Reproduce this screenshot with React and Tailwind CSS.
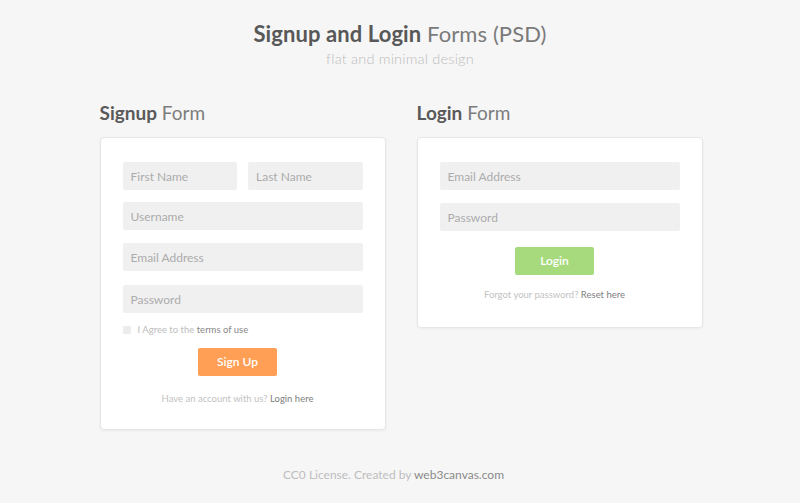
const inputCls =
	'block h-[28px] w-full rounded-[2px] bg-[#f0f0f0] px-[8px] text-[12px] text-[#555] placeholder:text-[#acacac] outline-none';

const Field = ({ placeholder, type = 'text', className = '' }) => (
	<input type={type} placeholder={placeholder} className={`${inputCls} ${className}`} />
);

const App = () => {
	return (
		<div
			className="min-h-[503px] w-full bg-[#f6f6f6] text-[#555]"
			style={{ fontFamily: 'Lato, "Open Sans", sans-serif' }}>
			{/* header */}
			<div className="pt-[20px] text-center">
				<h1 className="text-[22px] leading-[28px] tracking-[0.1px]">
					<span className="font-bold text-[#585858]">Signup and Login</span>{' '}
					<span className="text-[#7a7a7a]">Forms (PSD)</span>
				</h1>
				<p className="mt-[2px] text-[14.5px] leading-[18px] font-light tracking-[0.2px] text-[#bdbdbd]">
					flat and minimal design
				</p>
			</div>

			<div className="mt-[33px] flex justify-center gap-[31px] pl-[2px]">
				{/* signup */}
				<div className="w-[286px]">
					<h2 className="text-[19px] leading-[24px]">
						<span className="font-bold text-[#5a5a5a]">Signup</span>{' '}
						<span className="text-[#7d7d7d]">Form</span>
					</h2>
					<div className="mt-[12px] rounded-[4px] border border-[#e6e6e6] bg-white px-[22px] pt-[24px] pb-[25px] shadow-[0_1px_3px_rgba(0,0,0,0.05)]">
						<div className="flex gap-[11px]">
							<Field placeholder="First Name" />
							<Field placeholder="Last Name" />
						</div>
						<Field placeholder="Username" className="mt-[12px]" />
						<Field placeholder="Email Address" type="email" className="mt-[13px]" />
						<Field placeholder="Password" type="password" className="mt-[14px]" />
						<label className="mt-[13px] flex items-center gap-[7px] text-[9.5px] leading-[8px] text-[#bdbdbd]">
							<span className="block h-[8px] w-[8px] rounded-[1px] bg-[#ececec]" />
							<span>
								I Agree to the <span className="text-[#888]">terms of use</span>
							</span>
						</label>
						<div className="mt-[14px] flex justify-center pr-[10px]">
							<button className="h-[28px] w-[79px] rounded-[2px] bg-[#ff9e55] text-[12px] font-semibold text-white">
								Sign Up
							</button>
						</div>
						<p className="mt-[18px] pr-[10px] text-center text-[9.5px] leading-[10px] text-[#c2c2c2]">
							Have an account with us? <span className="text-[#808080]">Login here</span>
						</p>
					</div>
				</div>

				{/* login */}
				<div className="w-[286px]">
					<h2 className="text-[19px] leading-[24px]">
						<span className="font-bold text-[#5a5a5a]">Login</span>{' '}
						<span className="text-[#7d7d7d]">Form</span>
					</h2>
					<div className="mt-[12px] rounded-[4px] border border-[#e6e6e6] bg-white px-[22px] pt-[24px] pb-[27px] shadow-[0_1px_3px_rgba(0,0,0,0.05)]">
						<Field placeholder="Email Address" type="email" />
						<Field placeholder="Password" type="password" className="mt-[13px]" />
						<div className="mt-[16px] flex justify-center pr-[10px]">
							<button className="h-[28px] w-[79px] rounded-[2px] bg-[#a6da7c] text-[12px] font-semibold text-white">
								Login
							</button>
						</div>
						<p className="mt-[15px] pr-[10px] text-center text-[9.5px] leading-[10px] text-[#c2c2c2]">
							Forgot your password? <span className="text-[#808080]">Reset here</span>
						</p>
					</div>
				</div>
			</div>

			<p className="mt-[38px] pr-[13px] text-center text-[12px] leading-[14px] text-[#bdbdbd]">
				CC0 License. Created by <span className="text-[#8a8a8a]">web3canvas.com</span>
			</p>
		</div>
	);
};

export default App;
